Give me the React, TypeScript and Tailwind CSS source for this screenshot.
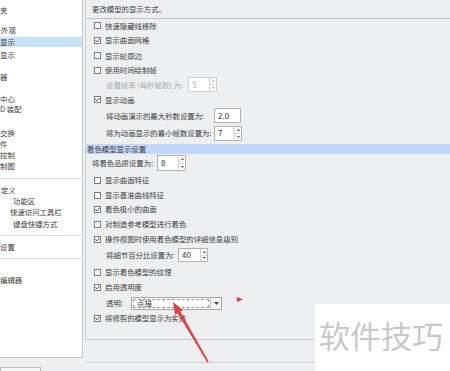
import React from "react";

const Cb = ({ checked }: { checked?: boolean }) => (
  <span className="w-[7px] h-[7px] border border-[#7b7b7b] bg-white flex items-center justify-center shrink-0">
    {checked && (
      <svg width="5" height="5" viewBox="0 0 5 5">
        <path d="M0.6 2.4 L2 3.9 L4.5 0.9" stroke="#2f2f2f" strokeWidth="0.9" fill="none" />
      </svg>
    )}
  </span>
);

const Spin = ({
  value,
  w,
  h,
  spinner = true,
  disabled = false,
}: {
  value: string;
  w: string;
  h: string;
  spinner?: boolean;
  disabled?: boolean;
}) => (
  <div className={`flex bg-white border ${disabled ? "border-[#cfcfcf]" : "border-[#b3b3b3]"} ${w} ${h}`}>
    <span className={`flex-1 flex items-center pl-[3px] text-[8px] ${disabled ? "text-[#b0b0b0]" : "text-[#333]"}`}>{value}</span>
    {spinner && (
      <div className="w-[7px] border-l border-[#d0d0d0] flex flex-col">
        <div className="flex-1 flex items-center justify-center border-b border-[#dcdcdc]">
          <svg width="3" height="2" viewBox="0 0 3 2">
            <path d="M0 2 L1.5 0 L3 2 Z" fill={disabled ? "#b8b8b8" : "#555"} />
          </svg>
        </div>
        <div className="flex-1 flex items-center justify-center">
          <svg width="3" height="2" viewBox="0 0 3 2">
            <path d="M0 0 L1.5 2 L3 0 Z" fill={disabled ? "#b8b8b8" : "#555"} />
          </svg>
        </div>
      </div>
    )}
  </div>
);

const CRow = ({ h, checked, text }: { h: string; checked?: boolean; text: string }) => (
  <div className={`${h} flex items-center pl-[8px] gap-[4px]`}>
    <Cb checked={checked} />
    <span className="whitespace-nowrap">{text}</span>
  </div>
);

export default function App() {
  return (
    <div
      className="relative w-[450px] h-[371px] overflow-hidden bg-[#eeeff1] text-[7.4px] leading-none text-[#3d3d3d]"
      style={{ fontFamily: '"Noto Sans CJK SC", "Noto Sans", sans-serif' }}
    >
      <div className="flex items-start">
        {/* left tree panel */}
        <div className="w-[83px] h-[358px] bg-white border-r border-b border-[#c9c9c9] flex flex-col shrink-0 whitespace-nowrap">
          <div className="h-[5px]" />
          <div className="h-[10px] flex items-center">夹</div>
          <div className="h-[10px]" />
          <div className="h-[10px] flex items-center pl-[1px]">外观</div>
          <div className="h-[2px]" />
          <div className="h-[10px] flex items-center bg-[#c8e2f8]">显示</div>
          <div className="h-[3px]" />
          <div className="h-[10px] flex items-center">显示</div>
          <div className="h-[12px]" />
          <div className="h-[10px] flex items-center">器</div>
          <div className="h-[12px]" />
          <div className="h-[10px] flex items-center">中心</div>
          <div className="h-[10px] flex items-center">D 装配</div>
          <div className="h-[14px]" />
          <div className="h-[10px] flex items-center">交换</div>
          <div className="h-[11px] flex items-center">件</div>
          <div className="h-[11px] flex items-center">控制</div>
          <div className="h-[1px]" />
          <div className="h-[10px] flex items-center">制图</div>
          <div className="h-[8px] border-b border-[#dedede]" />
          <div className="h-[6px]" />
          <div className="h-[10px] flex items-center pl-[1px]">定义</div>
          <div className="h-[11px] flex items-center pl-[13px]">功能区</div>
          <div className="h-[12px] flex items-center pl-[10px]">快速访问工具栏</div>
          <div className="h-[12px] flex items-center pl-[13px]">键盘快捷方式</div>
          <div className="h-[6px] border-b border-[#dedede]" />
          <div className="h-[6px]" />
          <div className="h-[10px] flex items-center">设置</div>
          <div className="h-[7px] border-b border-[#dedede]" />
          <div className="h-[16px]" />
          <div className="h-[10px] flex items-center">编辑器</div>
        </div>

        {/* right column */}
        <div className="flex-1 ml-[2px] flex flex-col">
          <div className="h-[340px] border-l border-b border-[#cfcfcf] flex flex-col">
            <div className="h-[19px] border-b border-[#c2c2c2] flex items-center pl-[6px] pb-[1px]">
              更改模型的显示方式。
            </div>
            <CRow h="h-[13px]" text="快速隐藏线移除" />
            <CRow h="h-[16px]" checked text="显示曲面网格" />
            <CRow h="h-[15px]" text="显示轮廓边" />
            <CRow h="h-[14px]" text="使用时间绘制帧" />
            <div className="h-[15px] flex items-center pl-[20px]">
              <span className="w-[82px] text-[#ababab] whitespace-nowrap">设置帧率 (每秒帧数) 为:</span>
              <Spin value="3" w="w-[29px]" h="h-[15px]" disabled />
            </div>
            <CRow h="h-[15px]" checked text="显示动画" />
            <div className="h-[17px] flex items-center pl-[20px]">
              <span className="w-[108px] whitespace-nowrap">将动画演示的最大秒数设置为:</span>
              <Spin value="2.0" w="w-[27px]" h="h-[15px]" spinner={false} />
            </div>
            <div className="h-[18px] flex items-center pl-[20px]">
              <span className="w-[108px] whitespace-nowrap">将为动画显示的最小帧数设置为:</span>
              <Spin value="7" w="w-[28px]" h="h-[15px]" />
            </div>
            <div className="h-[2px]" />
            <div className="h-[10px] bg-[#c4d8fb] flex items-center pl-[1px]">着色模型显示设置</div>
            <div className="h-[18px] flex items-center pl-[6px]">
              <span className="w-[65px] whitespace-nowrap">将着色品质设置为:</span>
              <Spin value="8" w="w-[29px]" h="h-[16px]" />
            </div>
            <CRow h="h-[16px]" text="显示曲面特征" />
            <CRow h="h-[14px]" text="显示基准曲线特征" />
            <CRow h="h-[14px]" checked text="着色极小的曲面" />
            <CRow h="h-[16px]" text="对制造参考模型进行着色" />
            <CRow h="h-[14px]" checked text="操作视图时使用着色模型的详细信息级别" />
            <div className="h-[18px] flex items-center pl-[20px]">
              <span className="w-[72px] whitespace-nowrap">将细节百分比设置为:</span>
              <Spin value="40" w="w-[30px]" h="h-[14px]" />
            </div>
            <CRow h="h-[16px]" text="显示着色模型的纹理" />
            <CRow h="h-[14px]" checked text="启用透明度" />
            <div className="h-[18px] flex items-center pl-[20px]">
              <span className="w-[25px] whitespace-nowrap">透明:</span>
              <div className="flex h-[13px] w-[91px] bg-white border border-[#a9a9a9]">
                <div className="flex-1 m-[1px] border border-dashed border-[#9a9a9a] flex items-center pl-[3px] text-[#333]">点描</div>
                <div className="w-[11px] border-l border-[#b9b9b9] flex items-center justify-center bg-[#f4f4f4]">
                  <svg width="5" height="3" viewBox="0 0 5 3">
                    <path d="M0 0 L2.5 3 L5 0 Z" fill="#444" />
                  </svg>
                </div>
              </div>
            </div>
            <CRow h="h-[12px]" checked text="将修剪的模型显示为实体" />
          </div>
          <div className="h-[23px] border-b border-[#cfcfcf]" />
        </div>
      </div>

      {/* bottom button edge */}
      <div className="mt-[4px] w-[41px] h-[12px] bg-[#f7f7f7] border border-[#b9b9b9]" />

      {/* red triangle marker */}
      <svg className="absolute left-[236px] top-[296px]" width="8" height="7" viewBox="0 0 8 7">
        <path d="M1 1 L7 3.5 L1 6 Z" fill="#e63b3b" />
      </svg>

      {/* red arrow */}
      <svg className="absolute left-0 top-0 pointer-events-none" width="450" height="371" viewBox="0 0 450 371">
        <polygon
          points="173,302 182.9,310.1 180.3,311.6 208.7,361.6 207.3,362.4 177.7,313.2 175.1,314.7"
          fill="#e5403a"
        />
      </svg>

      {/* watermark */}
      <div className="absolute left-[315px] top-[304px] w-[135px] h-[67px] bg-white flex items-start pl-[4px] pt-[15px]">
        <span className="text-[31px] leading-none text-[#c9c9c9] whitespace-nowrap" style={{ fontFamily: '"Noto Sans CJK SC", sans-serif' }}>
          软件技巧
        </span>
      </div>
    </div>
  );
}
